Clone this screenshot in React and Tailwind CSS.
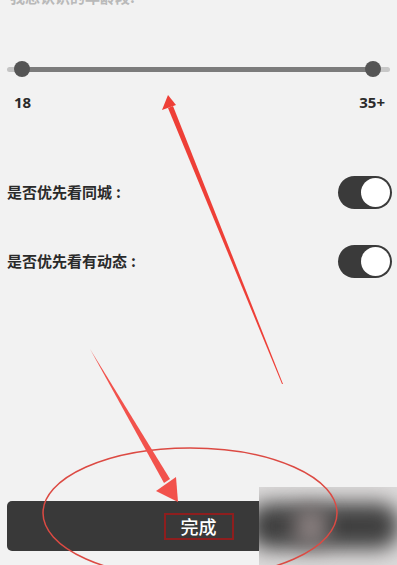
import React from "react";

function Toggle() {
  return (
    <div className="w-[54px] h-[33px] rounded-full bg-[#3a3a3a] flex items-center justify-end pr-[2px]">
      <div className="w-[29px] h-[29px] rounded-full bg-white" />
    </div>
  );
}

export default function App() {
  const cjk = { fontFamily: '"Noto Sans CJK SC", "Noto Sans", sans-serif' };
  return (
    <div
      className="relative w-[397px] h-[565px] overflow-hidden bg-[#f2f2f2] flex flex-col"
      style={cjk}
    >
      <div className="-mt-[12px] pl-[10px] text-[15px] leading-[17px] font-bold text-[#b9b9b9]">
        我想认识的年龄段:
      </div>

      {/* slider */}
      <div className="mt-[56px] mx-[7px] relative h-[16px] flex items-center">
        <div className="w-full h-[5px] rounded-full bg-[linear-gradient(to_right,#c4c4c4_0px,#c4c4c4_14px,#7c7c7c_14px,#7c7c7c_367px,#c8c8c8_367px)]" />
        <div className="absolute left-[7px] top-0 w-[16px] h-[16px] rounded-full bg-[#555555]" />
        <div className="absolute left-[358px] top-0 w-[16px] h-[16px] rounded-full bg-[#555555]" />
      </div>

      <div
        className="mt-[15px] flex justify-between pl-[14px] pr-[12px] text-[15px] leading-[20px] font-bold text-[#2a2a2a]"
        style={{ fontFamily: '"Noto Sans", sans-serif' }}
      >
        <span>18</span>
        <span>35+</span>
      </div>

      <div className="mt-[64px] flex flex-col gap-[36px] pl-[7px] pr-[5px]">
        <div className="flex items-center justify-between">
          <span className="text-[15px] font-bold text-[#2a2a2a]">
            是否优先看同城<span className="ml-[4px]">:</span>
          </span>
          <Toggle />
        </div>
        <div className="flex items-center justify-between">
          <span className="text-[15px] font-bold text-[#2a2a2a]">
            是否优先看有动态<span className="ml-[4px]">:</span>
          </span>
          <Toggle />
        </div>
      </div>

      <div className="mt-auto mb-[14px] mx-[7px] h-[50px] rounded-[5px] bg-[#393939] flex items-center justify-center">
        <div className="w-[70px] h-[27px] border-2 border-[#8e1e1e] flex items-center justify-center text-[18px] font-medium text-white">
          完成
        </div>
      </div>

      {/* blurred patch */}
      <div className="absolute left-[259px] top-[487px] w-[138px] h-[78px] bg-[#dcdada] overflow-hidden">
        <div className="absolute left-[-10px] top-[16px] w-[150px] h-[46px] rounded-[20px] bg-[#404040] blur-[10px]" />
        <div className="absolute left-[35px] top-[20px] w-[34px] h-[40px] rounded-full bg-[#8a8080] blur-[10px]" />
      </div>

      {/* annotations */}
      <svg className="absolute inset-0 pointer-events-none" width="397" height="565" viewBox="0 0 397 565">
        <ellipse cx="190" cy="513" rx="147" ry="65" fill="none" stroke="#dc4a43" strokeWidth="1.5" />
        <polygon points="283,384 173,106 168,108 282,384" fill="#ee3f37" />
        <polygon points="168,95 162,110 176,105" fill="#ee3f37" />
        <polygon points="90,349 164,483 170,479" fill="#f2524c" />
        <polygon points="178,502 156,491 176,477" fill="#f2524c" />
      </svg>
    </div>
  );
}
